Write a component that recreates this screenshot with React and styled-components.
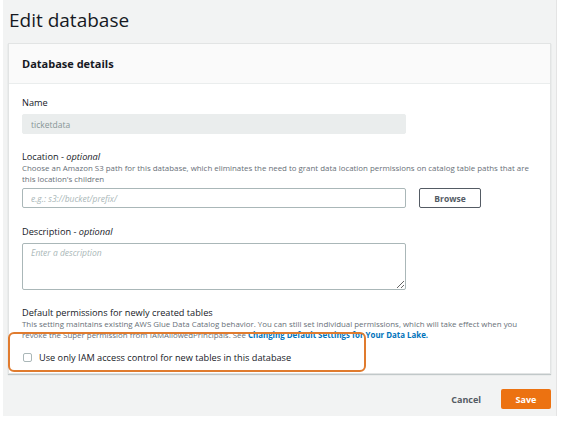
import React from 'react'
import styled, {createGlobalStyle} from 'styled-components'

const GlobalStl = createGlobalStyle`
  body {
    margin: 0;
    background: #fff;
    font-family: "Open Sans", "Noto Sans", sans-serif;
    color: #16191f;
  }
`

const PageStl = styled.div`
  width: 554px;
  height: 416px;
  margin-left: 3px;
  background: #f2f3f3;
  border-right: 1px solid #e4e4e4;
  padding: 0 5px 0 5px;
  box-sizing: border-box;
`

const TitleStl = styled.h1`
  margin: 0;
  padding: 7px 0 0 1px;
  height: 43px;
  box-sizing: border-box;
  font-size: 19px;
  font-weight: 400;
  line-height: 26px;
  color: #16191f;
`

const PanelStl = styled.div`
  background: #fff;
  border: 1px solid #e2e4e4;
  box-shadow: 0 1px 1px rgba(0, 28, 36, 0.2);
`

const PanelHeadStl = styled.div`
  background: #fafafa;
  border-bottom: 1px solid #eaeded;
  height: 40px;
  box-sizing: border-box;
  padding: 12px 13px 0;
  font-size: 11px;
  line-height: 15px;
  font-weight: 700;
`

const PanelBodyStl = styled.div`
  padding: 13px 13px 10px;
  display: flex;
  flex-direction: column;
  gap: 17px;
`

const FieldStl = styled.div`
  display: flex;
  flex-direction: column;
  position: relative;
  margin-top: ${p => p.$shift || 0}px;
`

const LabelStl = styled.div`
  font-size: 9.2px;
  line-height: 12px;
  color: #16191f;
  margin-bottom: ${p => p.$gap ?? 5}px;
  i {
    font-style: italic;
  }
`

const HintStl = styled.div`
  font-size: 7.9px;
  line-height: 11px;
  color: #687078;
  margin-bottom: 3px;
  a {
    color: #0073bb;
    font-weight: 700;
    text-decoration: none;
  }
`

const InputStl = styled.input`
  width: 384px;
  height: 20px;
  box-sizing: border-box;
  border: 1px solid ${p => p.disabled ? '#eaeded' : '#aab7b8'};
  background: ${p => p.disabled ? '#eaeded' : '#fff'};
  border-radius: 2px;
  padding: 0 8px;
  font-family: inherit;
  font-size: 8.5px;
  color: #879596;
  outline: none;
  &::placeholder {
    color: #aab7b8;
    font-style: italic;
  }
`

const RowStl = styled.div`
  display: flex;
  align-items: center;
  gap: 13px;
`

const BrowseStl = styled.button`
  width: 62px;
  height: 20px;
  border: 1px solid #545b64;
  border-radius: 2px;
  background: #fff;
  font-family: inherit;
  font-size: 8.5px;
  font-weight: 700;
  color: #545b64;
  padding: 0;
`

const TextAreaStl = styled.textarea`
  width: 384px;
  height: 47px;
  box-sizing: border-box;
  border: 1px solid #aab7b8;
  border-radius: 2px;
  padding: 3px 8px;
  font-family: inherit;
  font-size: 8.5px;
  resize: vertical;
  outline: none;
  &::placeholder {
    color: #aab7b8;
    font-style: italic;
  }
`

const CheckRowStl = styled.label`
  display: flex;
  align-items: center;
  gap: 7px;
  height: 12px;
  margin-top: 7px;
  padding-left: 1px;
  font-size: 9.2px;
  color: #16191f;
`

const BoxStl = styled.span`
  width: 9px;
  height: 9px;
  box-sizing: border-box;
  border: 1px solid #aab7b8;
  border-radius: 2px;
  background: #fff;
`

const HighlightStl = styled.div`
  position: absolute;
  left: -14px;
  top: 25px;
  width: 358px;
  height: 40px;
  box-sizing: border-box;
  border: 2px solid #e07b2e;
  border-radius: 6px;
  pointer-events: none;
`

const FooterStl = styled.div`
  display: flex;
  justify-content: flex-end;
  align-items: center;
  gap: 20px;
  padding-top: 15px;
`

const CancelStl = styled.button`
  border: none;
  background: none;
  font-family: inherit;
  font-size: 9px;
  font-weight: 700;
  color: #545b64;
  padding: 0;
`

const SaveStl = styled.button`
  width: 50px;
  height: 20px;
  border: none;
  border-radius: 2px;
  background: #ec7211;
  color: #fff;
  font-family: inherit;
  font-size: 9px;
  font-weight: 700;
  padding: 0;
`

export default function App() {
  return (
    <PageStl>
      <GlobalStl/>
      <TitleStl>Edit database</TitleStl>
      <PanelStl>
        <PanelHeadStl>Database details</PanelHeadStl>
        <PanelBodyStl>
          <FieldStl>
            <LabelStl>Name</LabelStl>
            <InputStl disabled value="ticketdata" readOnly/>
          </FieldStl>
          <FieldStl>
            <LabelStl $gap={0}>Location - <i>optional</i></LabelStl>
            <HintStl>
              Choose an Amazon S3 path for this database, which eliminates the need to grant data location permissions on catalog table paths that are this location's children
            </HintStl>
            <RowStl>
              <InputStl placeholder="e.g.: s3://bucket/prefix/"/>
              <BrowseStl>Browse</BrowseStl>
            </RowStl>
          </FieldStl>
          <FieldStl $shift={1}>
            <LabelStl>Description - <i>optional</i></LabelStl>
            <TextAreaStl placeholder="Enter a description"/>
          </FieldStl>
          <FieldStl>
            <LabelStl $gap={0}>Default permissions for newly created tables</LabelStl>
            <HintStl>
              This setting maintains existing AWS Glue Data Catalog behavior. You can still set individual permissions, which will take effect when you revoke the Super permission from IAMAllowedPrincipals. See <a href="#">Changing Default Settings for Your Data Lake.</a>
            </HintStl>
            <CheckRowStl>
              <BoxStl/>
              Use only IAM access control for new tables in this database
            </CheckRowStl>
            <HighlightStl/>
          </FieldStl>
        </PanelBodyStl>
      </PanelStl>
      <FooterStl>
        <CancelStl>Cancel</CancelStl>
        <SaveStl>Save</SaveStl>
      </FooterStl>
    </PageStl>
  )
}
